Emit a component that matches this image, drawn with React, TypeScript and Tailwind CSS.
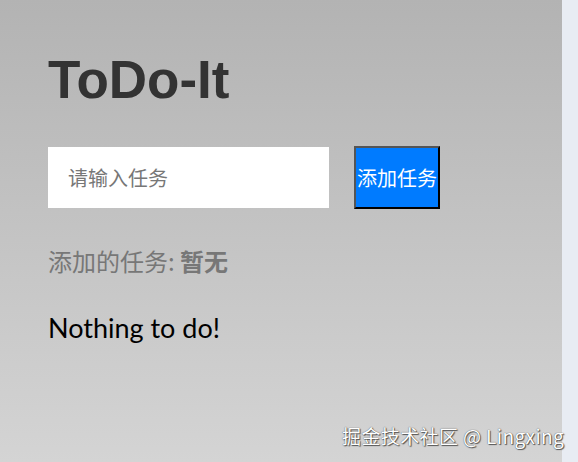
import React from "react";

export default function App() {
  return (
    <div className="flex h-[462px] w-[578px] bg-[#e8ecf3] overflow-hidden">
      <div className="relative h-[462px] w-[562px] shrink-0 bg-gradient-to-b from-[#b3b3b3] to-[#d4d4d4] pl-[48px] pt-[54px]">
        <h1 className="text-[53px] leading-[52px] font-bold text-[#333] [font-family:'Liberation_Sans',Arial,sans-serif]">
          ToDo-It
        </h1>
        <div className="mt-[40px] flex items-center gap-[25px]">
          <input
            placeholder="请输入任务"
            className="h-[61px] w-[281px] bg-white px-[20px] text-[20px] text-[#333] placeholder:text-[#777] outline-none [font-family:'Noto_Sans_CJK_SC',sans-serif]"
          />
          <button className="h-[63px] w-[86px] border-2 border-t-[#555] border-l-[#555] border-r-black border-b-black bg-[#007bff] px-0 text-[20px] leading-none text-white [font-family:'Noto_Sans_CJK_SC',sans-serif] whitespace-nowrap">
            添加任务
          </button>
        </div>
        <p className="mt-[40px] text-[24px] leading-[24px] text-[#777] [font-family:'Noto_Sans_CJK_SC',sans-serif]">
          添加的任务: <b className="font-bold">暂无</b>
        </p>
        <p className="mt-[40px] text-[27px] leading-[30px] text-black [font-family:Lato,'Noto_Sans_CJK_SC',sans-serif]">
          Nothing to do!
        </p>
        <div className="absolute left-[342px] top-[424px] whitespace-nowrap text-[19px] tracking-[0.4px] leading-[24px] text-white [font-family:'Noto_Sans_CJK_SC',sans-serif] [text-shadow:0_0_1px_#333,1px_1px_1px_#555]">
          掘金技术社区 @ Lingxing
        </div>
      </div>
    </div>
  );
}
